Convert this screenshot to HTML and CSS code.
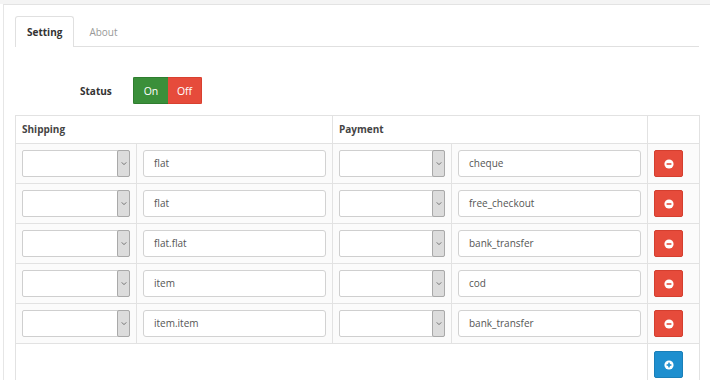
FILE: index.html
```html
<!DOCTYPE html>
<html>
<head>
<meta charset="utf-8">
<link rel="stylesheet" href="styles.css">
</head>
<body>
<div class="topstrip"></div>
<div class="panel">
  <div class="tabs">
    <div class="tab active">Setting</div>
    <div class="tab">About</div>
  </div>
  <div class="status-row">
    <span class="status-label">Status</span>
    <div class="toggle">
      <span class="tg on">On</span>
      <span class="tg off">Off</span>
    </div>
  </div>
  <table class="grid">
    <colgroup>
      <col class="c1"><col class="c2"><col class="c3"><col class="c4"><col class="c5">
    </colgroup>
    <thead>
      <tr><th colspan="2">Shipping</th><th colspan="2">Payment</th><th></th></tr>
    </thead>
    <tbody>
      <tr>
        <td><div class="sel"><span class="arrow"><svg viewBox="0 0 8 6" width="6" height="5"><path d="M1 1.5 L4 4.5 L7 1.5" fill="none" stroke="#666" stroke-width="1.2"/></svg></span></div></td>
        <td><div class="inp">flat</div></td>
        <td><div class="sel"><span class="arrow"><svg viewBox="0 0 8 6" width="6" height="5"><path d="M1 1.5 L4 4.5 L7 1.5" fill="none" stroke="#666" stroke-width="1.2"/></svg></span></div></td>
        <td><div class="inp">cheque</div></td>
        <td><span class="btn red"><svg viewBox="0 0 10 10" width="10" height="10"><circle cx="5" cy="5" r="4.6" fill="#fff"/><rect x="2.6" y="4.2" width="4.8" height="1.6" fill="#e64b3b"/></svg></span></td>
      </tr>
      <tr>
        <td><div class="sel"><span class="arrow"><svg viewBox="0 0 8 6" width="6" height="5"><path d="M1 1.5 L4 4.5 L7 1.5" fill="none" stroke="#666" stroke-width="1.2"/></svg></span></div></td>
        <td><div class="inp">flat</div></td>
        <td><div class="sel"><span class="arrow"><svg viewBox="0 0 8 6" width="6" height="5"><path d="M1 1.5 L4 4.5 L7 1.5" fill="none" stroke="#666" stroke-width="1.2"/></svg></span></div></td>
        <td><div class="inp">free_checkout</div></td>
        <td><span class="btn red"><svg viewBox="0 0 10 10" width="10" height="10"><circle cx="5" cy="5" r="4.6" fill="#fff"/><rect x="2.6" y="4.2" width="4.8" height="1.6" fill="#e64b3b"/></svg></span></td>
      </tr>
      <tr>
        <td><div class="sel"><span class="arrow"><svg viewBox="0 0 8 6" width="6" height="5"><path d="M1 1.5 L4 4.5 L7 1.5" fill="none" stroke="#666" stroke-width="1.2"/></svg></span></div></td>
        <td><div class="inp">flat.flat</div></td>
        <td><div class="sel"><span class="arrow"><svg viewBox="0 0 8 6" width="6" height="5"><path d="M1 1.5 L4 4.5 L7 1.5" fill="none" stroke="#666" stroke-width="1.2"/></svg></span></div></td>
        <td><div class="inp">bank_transfer</div></td>
        <td><span class="btn red"><svg viewBox="0 0 10 10" width="10" height="10"><circle cx="5" cy="5" r="4.6" fill="#fff"/><rect x="2.6" y="4.2" width="4.8" height="1.6" fill="#e64b3b"/></svg></span></td>
      </tr>
      <tr>
        <td><div class="sel"><span class="arrow"><svg viewBox="0 0 8 6" width="6" height="5"><path d="M1 1.5 L4 4.5 L7 1.5" fill="none" stroke="#666" stroke-width="1.2"/></svg></span></div></td>
        <td><div class="inp">item</div></td>
        <td><div class="sel"><span class="arrow"><svg viewBox="0 0 8 6" width="6" height="5"><path d="M1 1.5 L4 4.5 L7 1.5" fill="none" stroke="#666" stroke-width="1.2"/></svg></span></div></td>
        <td><div class="inp">cod</div></td>
        <td><span class="btn red"><svg viewBox="0 0 10 10" width="10" height="10"><circle cx="5" cy="5" r="4.6" fill="#fff"/><rect x="2.6" y="4.2" width="4.8" height="1.6" fill="#e64b3b"/></svg></span></td>
      </tr>
      <tr>
        <td><div class="sel"><span class="arrow"><svg viewBox="0 0 8 6" width="6" height="5"><path d="M1 1.5 L4 4.5 L7 1.5" fill="none" stroke="#666" stroke-width="1.2"/></svg></span></div></td>
        <td><div class="inp">item.item</div></td>
        <td><div class="sel"><span class="arrow"><svg viewBox="0 0 8 6" width="6" height="5"><path d="M1 1.5 L4 4.5 L7 1.5" fill="none" stroke="#666" stroke-width="1.2"/></svg></span></div></td>
        <td><div class="inp">bank_transfer</div></td>
        <td><span class="btn red"><svg viewBox="0 0 10 10" width="10" height="10"><circle cx="5" cy="5" r="4.6" fill="#fff"/><rect x="2.6" y="4.2" width="4.8" height="1.6" fill="#e64b3b"/></svg></span></td>
      </tr>
    </tbody>
    <tfoot>
      <tr>
        <td colspan="4" class="blank"></td>
        <td><span class="btn blue"><svg viewBox="0 0 10 10" width="10" height="10"><circle cx="5" cy="5" r="4.6" fill="#fff"/><rect x="2.6" y="4.2" width="4.8" height="1.6" fill="#1e8fcf"/><rect x="4.2" y="2.6" width="1.6" height="4.8" fill="#1e8fcf"/></svg></span></td>
      </tr>
    </tfoot>
  </table>
</div>
</body>
</html>
```
FILE: styles.css
```css
html, body {
  margin: 0;
  padding: 0;
  background: #fff;
  font-family: "Open Sans", "Liberation Sans", sans-serif;
  font-size: 10px;
  color: #555;
}
.topstrip {
  height: 4px;
  background: #f4f4f4;
}
.panel {
  margin-left: 3px;
  border-left: 1px solid #e6e6e6;
  border-top: 1px solid #e3e3e3;
  padding: 11px 11px 0 11px;
  height: 400px;
}
.tabs {
  display: flex;
  border-bottom: 1px solid #e0e0e0;
  height: 30px;
}
.tab {
  height: 30px;
  line-height: 30px;
  padding: 0 12px;
  margin-right: 2px;
  color: #999;
  border: 1px solid transparent;
  border-bottom: none;
  box-sizing: border-box;
  height: 31px;
}
.tab.active {
  color: #333;
  font-weight: 700;
  background: #fff;
  border-color: #e0e0e0;
  border-radius: 3px 3px 0 0;
  padding: 0 11px;
}
.status-row {
  display: flex;
  align-items: center;
  margin-top: 30px;
  padding-left: 65px;
  height: 27px;
}
.status-label {
  font-weight: 700;
  color: #333;
  width: 53px;
}
.toggle {
  display: flex;
  height: 27px;
  border-radius: 2px;
  overflow: hidden;
}
.tg {
  display: flex;
  align-items: center;
  justify-content: center;
  color: #fff;
  font-size: 10.5px;
}
.tg.on {
  width: 35px;
  background: #3a8f3a;
  border: 1px solid #2f7d2f;
  border-right: none;
  box-sizing: border-box;
}
.tg.off {
  width: 34px;
  background: #e64b3b;
  border: 1px solid #d8402f;
  border-left: none;
  box-sizing: border-box;
}
.grid {
  margin-top: 11px;
  border-collapse: collapse;
  table-layout: fixed;
  width: 684px;
}
.c1 { width: 121px; }
.c2 { width: 196px; }
.c3 { width: 119px; }
.c4 { width: 196px; }
.c5 { width: 52px; }
.grid th, .grid td {
  border: 1px solid #e2e2e2;
  padding: 6px;
  text-align: left;
  vertical-align: top;
}
.grid th {
  height: 15px;
  padding: 6px 6px 6px;
  color: #444;
  font-weight: 700;
  background: #fff;
}
.grid tbody td {
  background: #fbfbfb;
}
.grid tfoot td {
  background: #fff;
  padding-top: 7px;
  height: 40px;
}
.sel {
  position: relative;
  height: 27px;
  border: 1px solid #cfcfcf;
  border-radius: 2px;
  background: #fff;
  box-sizing: border-box;
}
.arrow {
  position: absolute;
  right: -1px;
  top: -1px;
  bottom: -1px;
  width: 13px;
  background: #dcdcdc;
  border: 1px solid #a9a9a9;
  border-radius: 2px;
  box-sizing: border-box;
  display: flex;
  align-items: center;
  justify-content: center;
}
.inp {
  height: 27px;
  line-height: 25px;
  border: 1px solid #d2d2d2;
  border-radius: 3px;
  background: #fff;
  padding-left: 10px;
  box-sizing: border-box;
  color: #555;
}
.btn {
  display: flex;
  align-items: center;
  justify-content: center;
  width: 29px;
  height: 27px;
  border-radius: 2px;
  box-sizing: border-box;
}
.btn.red {
  background: #e64b3b;
  border: 1px solid #d43f2f;
}
.btn.blue {
  background: #1e8fcf;
  border: 1px solid #1a7fb8;
}
```
